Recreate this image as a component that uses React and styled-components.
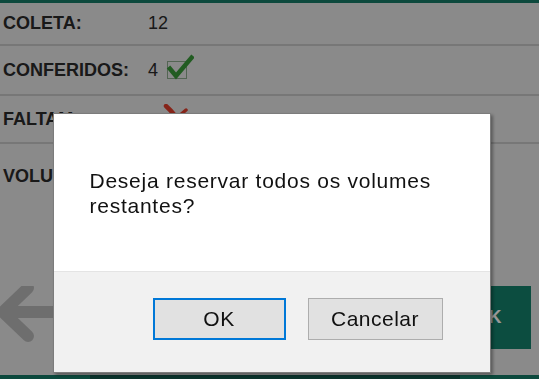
import styled, { createGlobalStyle } from "styled-components";

const GlobalStyle = createGlobalStyle`
  html, body {
    margin: 0;
    padding: 0;
    overflow: hidden;
  }
  body {
    font-family: "Liberation Sans", Arial, sans-serif;
    background: #e6e6e6;
  }
`;

const Page = styled.div`
  height: 379px;
  display: flex;
  flex-direction: column;
  background: #e6e6e6;
`;

const TopBar = styled.div`
  height: 3px;
  background: #177b67;
`;

const InfoRow = styled.div`
  height: ${(p) => p.$h}px;
  box-sizing: border-box;
  border-bottom: ${(p) => (p.$last ? "none" : "2px solid #c6c6c6")};
  display: flex;
  align-items: center;
  padding-left: 3px;
`;

const Label = styled.span`
  width: 145px;
  font-size: 18px;
  font-weight: bold;
  color: #2a2a2a;
`;

const Value = styled.span`
  display: flex;
  align-items: center;
  font-size: 18px;
  color: #2a2a2a;
`;

const IconBox = styled.svg`
  margin-left: ${(p) => p.$ml || 0}px;
  margin-top: ${(p) => p.$mt || 0}px;
  flex-shrink: 0;
`;

const Spacer = styled.div`
  flex: 1;
`;

const NavRow = styled.div`
  height: 63px;
  display: flex;
  justify-content: space-between;
  padding-right: 8px;
  margin-bottom: 26px;
`;

const GreenButton = styled.button`
  width: 86px;
  height: 63px;
  border: none;
  background: #14806b;
  color: #ffffff;
  font-family: "Liberation Sans", Arial, sans-serif;
  font-size: 18px;
  font-weight: bold;
`;

const BottomBar = styled.div`
  height: 4px;
  display: grid;
  grid-template-columns: 90px 1fr 79px;
`;

const BarPart = styled.div`
  background: ${(p) => (p.$active ? "#147b66" : "#115549")};
`;

const Overlay = styled.div`
  position: fixed;
  inset: 0;
  background: rgba(0, 0, 0, 0.4);
  display: flex;
  justify-content: center;
  align-items: flex-start;
  padding: 113px 0 0 4px;
  box-sizing: border-box;
`;

const Dialog = styled.div`
  width: 438px;
  height: 260px;
  box-sizing: border-box;
  background: #ffffff;
  border: 1px solid #7c7c7c;
  box-shadow: 2px 2px 3px rgba(0, 0, 0, 0.35);
  display: flex;
  flex-direction: column;
`;

const Message = styled.div`
  height: 157px;
  box-sizing: border-box;
  padding: 54px 36px 0 36px;
  font-size: 21px;
  letter-spacing: 0.75px;
  line-height: 25px;
  color: #111111;
`;

const Footer = styled.div`
  flex: 1;
  background: #f1f1f1;
  border-top: 1px solid #e4e4e4;
  display: flex;
  justify-content: flex-end;
  align-items: flex-start;
  gap: 22px;
  padding: 26px 47px 0 0;
`;

const DialogButton = styled.button`
  width: ${(p) => p.$w}px;
  height: 42px;
  box-sizing: border-box;
  background: #e1e1e1;
  border: ${(p) => (p.$primary ? "2px solid #0078d7" : "1px solid #adadad")};
  font-family: "Liberation Sans", Arial, sans-serif;
  font-size: 21px;
  letter-spacing: 0.5px;
  color: #111111;
  padding: 0;
`;

const CheckIcon = () => (
  <IconBox $ml={8} $mt={-6} width="28" height="26" viewBox="0 0 28 26">
    <rect x="1.5" y="7.5" width="19" height="17" fill="none" stroke="#8aa88a" strokeWidth="1" />
    <path d="M2.5 13 L10 22 L27 2" fill="none" stroke="#3a9a3a" strokeWidth="4.5" />
  </IconBox>
);

const CrossIcon = () => (
  <IconBox $ml={15} $mt={-2} width="26" height="28" viewBox="0 0 26 28">
    <path d="M3 2 Q12 10 23 27" fill="none" stroke="#e03c2a" strokeWidth="4.5" strokeLinecap="round" />
    <path d="M23 6 Q13 14 3 27" fill="none" stroke="#e03c2a" strokeWidth="3.5" strokeLinecap="round" />
  </IconBox>
);

const BackArrow = () => (
  <IconBox width="70" height="64" viewBox="0 0 70 64">
    <path
      d="M28 2 L3 26 L28 50 M5 26 L70 26"
      fill="none"
      stroke="#b8b8b8"
      strokeWidth="12"
      strokeLinecap="round"
      strokeLinejoin="round"
    />
  </IconBox>
);

export default function App() {
  return (
    <>
      <GlobalStyle />
      <Page>
        <TopBar />
        <InfoRow $h={43}>
          <Label>COLETA:</Label>
          <Value>12</Value>
        </InfoRow>
        <InfoRow $h={50}>
          <Label>CONFERIDOS:</Label>
          <Value>
            4
            <CheckIcon />
          </Value>
        </InfoRow>
        <InfoRow $h={48}>
          <Label>FALTAM:</Label>
          <Value>
            <CrossIcon />
          </Value>
        </InfoRow>
        <InfoRow $h={64} $last>
          <Label>VOLUMES:</Label>
        </InfoRow>
        <Spacer />
        <NavRow>
          <BackArrow />
          <GreenButton>OK</GreenButton>
        </NavRow>
        <BottomBar>
          <BarPart $active />
          <BarPart />
          <BarPart $active />
        </BottomBar>
      </Page>
      <Overlay>
        <Dialog>
          <Message>Deseja reservar todos os volumes restantes?</Message>
          <Footer>
            <DialogButton $primary $w={133}>OK</DialogButton>
            <DialogButton $w={135}>Cancelar</DialogButton>
          </Footer>
        </Dialog>
      </Overlay>
    </>
  );
}
